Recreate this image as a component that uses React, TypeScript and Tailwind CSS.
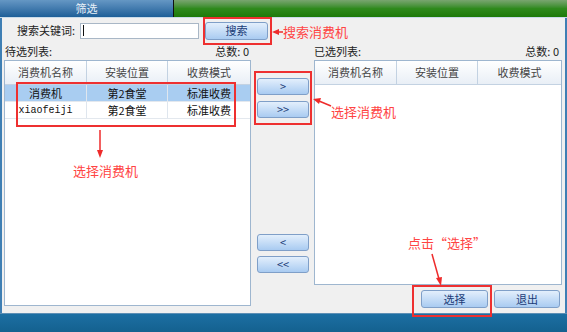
const cjk = '"Noto Sans CJK SC", "DejaVu Sans", sans-serif';

function Btn({ children, className = '' }: { children: React.ReactNode; className?: string }) {
  return (
    <button
      className={`flex items-center justify-center rounded-[3px] border border-[#7f9fc8] bg-gradient-to-b from-[#e3effc] to-[#a9cbf1] text-[11px] text-[#1c3c78] leading-none ${className}`}
    >
      {children}
    </button>
  );
}

function TableBox({ rows, height }: { rows: string[][]; height: string }) {
  return (
    <div className={`flex flex-col border border-[#9eb6cf] bg-white ${height}`}>
      <div className="flex h-[24px] border-b border-[#c3d2e2] bg-gradient-to-b from-[#ffffff] to-[#e9eff6] text-[11px] text-[#444]">
        <div className="flex w-[82px] items-center justify-center border-r border-[#c3d2e2]">消费机名称</div>
        <div className="flex w-[81px] items-center justify-center border-r border-[#c3d2e2]">安装位置</div>
        <div className="flex flex-1 items-center justify-center">收费模式</div>
      </div>
      {rows.map((r, i) => (
        <div
          key={i}
          className={`flex h-[17px] border-b border-[#e3e8ee] text-[11px] text-[#111] ${i === 0 ? 'bg-[#a9cdf1]' : 'bg-white'}`}
        >
          <div className="flex w-[82px] items-center justify-center border-r border-[#dfe6ee]">
            {r[0] === 'xiaofeiji' ? (
              <span style={{ fontFamily: '"Liberation Mono", monospace' }} className="text-[10px]">xiaofeiji</span>
            ) : (
              r[0]
            )}
          </div>
          <div className="flex w-[81px] items-center justify-center border-r border-[#dfe6ee]">{r[1]}</div>
          <div className="flex flex-1 items-center justify-center">{r[2]}</div>
        </div>
      ))}
    </div>
  );
}

export default function App() {
  return (
    <div className="relative flex h-[332px] w-[567px] flex-col overflow-hidden bg-[#f0f0f0]" style={{ fontFamily: cjk }}>
      {/* title bar */}
      <div className="flex h-[18px] border-b border-[#c9dbe9]">
        <div className="flex w-[173px] items-center justify-center bg-gradient-to-b from-[#6597c4] to-[#1c5f98] text-[11px] text-[#e8f0f8]">
          筛选
        </div>
        <div className="w-[1px] bg-[#111]" />
        <div className="flex-1 bg-gradient-to-b from-[#79a56f] via-[#2f8a1c] to-[#1d7a08]" />
      </div>

      {/* body */}
      <div className="flex flex-1 flex-col border-x-2 border-[#3f7fb4] bg-[#f0f0f0]">
        <div className="flex h-[25px] items-center pl-[15px]">
          <span className="w-[63px] whitespace-nowrap text-[11px] text-[#222]">搜索关键词:</span>
          <div className="flex h-[16px] w-[119px] items-center border border-[#a9b7c6] bg-white pl-[2px]">
            <div className="h-[11px] w-[1px] bg-[#111]" />
          </div>
          <Btn className="ml-[6px] h-[18px] w-[63px]">搜索</Btn>
        </div>

        <div className="flex flex-1 pl-[2px]">
          {/* left list */}
          <div className="flex w-[247px] flex-col">
            <div className="flex h-[17px] items-center justify-between pl-[1px] pr-[2px] text-[11px] text-[#222]">
              <span>待选列表:</span>
              <span>总数: 0</span>
            </div>
            <TableBox
              height="h-[246px]"
              rows={[
                ['消费机', '第2食堂', '标准收费'],
                ['xiaofeiji', '第2食堂', '标准收费'],
              ]}
            />
          </div>

          {/* middle buttons */}
          <div className="ml-[6px] flex w-[52px] flex-col pt-[35px]">
            <Btn className="h-[17px] w-[52px]">&gt;</Btn>
            <Btn className="mt-[6px] h-[17px] w-[52px]">&gt;&gt;</Btn>
            <Btn className="mt-[116px] h-[17px] w-[52px]">&lt;</Btn>
            <Btn className="mt-[5px] h-[17px] w-[52px]">&lt;&lt;</Btn>
          </div>

          {/* right list */}
          <div className="ml-[5px] flex w-[248px] flex-col">
            <div className="flex h-[17px] items-center justify-between pr-[3px] text-[11px] text-[#222]">
              <span>已选列表:</span>
              <span>总数: 0</span>
            </div>
            <TableBox height="h-[225px]" rows={[]} />
            <div className="mt-[5px] flex justify-end gap-[6px] pr-[2px]">
              <Btn className="h-[18px] w-[67px]">选择</Btn>
              <Btn className="h-[18px] w-[66px]">退出</Btn>
            </div>
          </div>
        </div>
      </div>

      {/* bottom bar */}
      <div className="h-[19px] border-t border-[#5d8fb5] bg-gradient-to-b from-[#1c6fa3] to-[#14618f]" />

      {/* annotations */}
      <div className="pointer-events-none absolute left-[203px] top-[17px] h-[28px] w-[69px] border-2 border-[#ee3030]" />
      <div className="pointer-events-none absolute left-[16px] top-[82px] h-[45px] w-[220px] border-2 border-[#ee3030]" />
      <div className="pointer-events-none absolute left-[254px] top-[71px] h-[54px] w-[58px] border-2 border-[#ee3030]" />
      <div className="pointer-events-none absolute left-[412px] top-[285px] h-[32px] w-[80px] border-2 border-[#ee3030]" />

      <span className="absolute left-[283px] top-[22px] text-[13px] text-[#ff4444]">搜索消费机</span>
      <span className="absolute left-[73px] top-[161px] text-[13px] text-[#ff4444]">选择消费机</span>
      <span className="absolute left-[331px] top-[102px] text-[13px] text-[#ff4444]">选择消费机</span>
      <span className="absolute left-[408px] top-[233px] text-[13px] text-[#ff4444]">点击“选择”</span>

      <svg className="pointer-events-none absolute left-0 top-0" width="567" height="332">
        <g stroke="#ee2b2b" strokeWidth="1.5" fill="#ee2b2b">
          <line x1="283" y1="32" x2="277" y2="32" />
          <polygon points="272,32 279,29 279,35" stroke="none" />
          <line x1="100" y1="130" x2="100" y2="152" />
          <polygon points="100,158 97,150 103,150" stroke="none" />
          <line x1="331" y1="106" x2="319" y2="101" />
          <polygon points="313,99 321,98 319,104" stroke="none" />
          <line x1="432" y1="254" x2="439" y2="279" />
          <polygon points="441,286 436,278 442,277" stroke="none" />
        </g>
      </svg>
    </div>
  );
}
